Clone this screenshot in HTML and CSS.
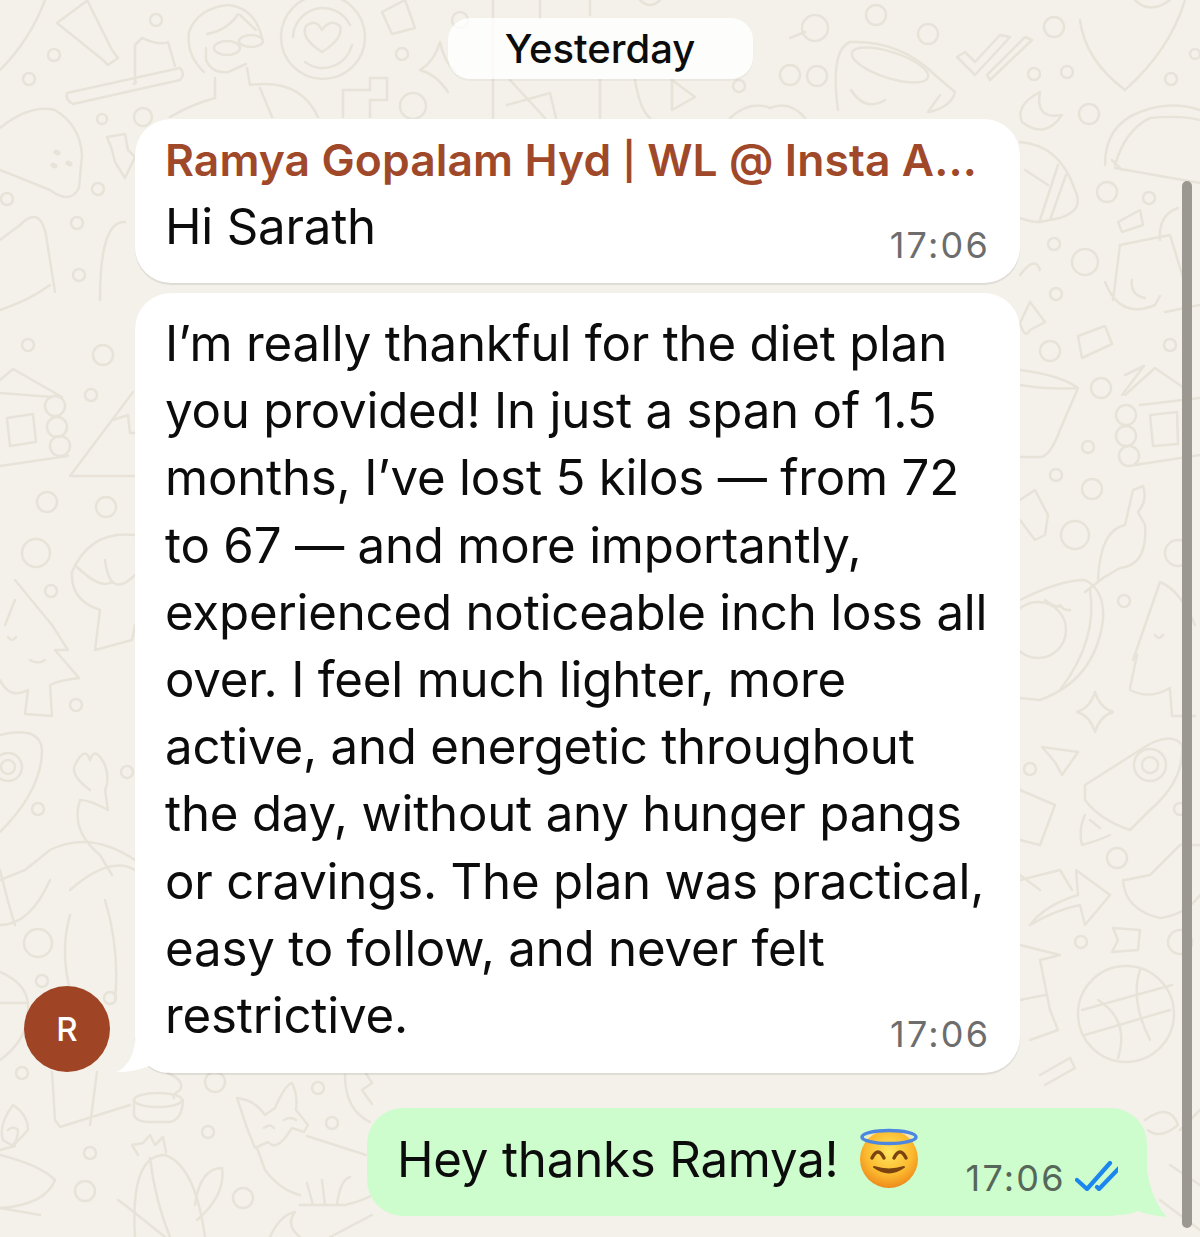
FILE: index.html
```html
<!DOCTYPE html>
<html lang="en">
<head>
  <meta charset="UTF-8" />
  <title>Chat</title>
  <link rel="stylesheet" href="styles.css">
</head>
<body>

<div class="chat">
  <svg class="doodles" viewBox="0 0 1200 1237" xmlns="http://www.w3.org/2000/svg">
    <!-- small rings -->
    <g>
      <circle cx="54" cy="55" r="6"/><circle cx="29" cy="79" r="6"/><circle cx="156" cy="20" r="6"/><circle cx="102" cy="119" r="5"/><circle cx="143" cy="117" r="9"/>
      <circle cx="402" cy="54" r="6"/><circle cx="413" cy="106" r="13"/><circle cx="7" cy="199" r="6"/><circle cx="98" cy="189" r="6"/><circle cx="77" cy="223" r="6"/><circle cx="79" cy="275" r="6"/>
      <circle cx="815" cy="28" r="13"/><circle cx="876" cy="15" r="10"/><circle cx="928" cy="34" r="10"/><circle cx="1054" cy="27" r="10"/><circle cx="1034" cy="74" r="6"/><circle cx="1067" cy="72" r="6"/>
      <circle cx="1171" cy="79" r="6"/><circle cx="1195" cy="54" r="5"/><circle cx="1089" cy="114" r="10"/><circle cx="1107" cy="192" r="10"/><circle cx="1149" cy="198" r="6"/><circle cx="1054" cy="244" r="6"/><circle cx="1085" cy="262" r="13"/>
      <circle cx="28" cy="345" r="6"/><circle cx="103" cy="355" r="10"/><circle cx="91" cy="395" r="6"/><circle cx="47" cy="502" r="10"/><circle cx="106" cy="507" r="10"/><circle cx="36" cy="553" r="14"/><circle cx="51" cy="591" r="6"/><circle cx="76" cy="705" r="6"/><circle cx="127" cy="772" r="6"/><circle cx="38" cy="809" r="6"/><circle cx="38" cy="943" r="14"/>
      <circle cx="1056" cy="294" r="6"/><circle cx="1050" cy="351" r="10"/><circle cx="1170" cy="345" r="6"/><circle cx="1101" cy="388" r="10"/><circle cx="1088" cy="447" r="6"/><circle cx="1056" cy="475" r="6"/><circle cx="1092" cy="489" r="10"/><circle cx="1075" cy="535" r="14"/><circle cx="1124" cy="601" r="6"/><circle cx="1178" cy="553" r="13"/><circle cx="1030" cy="769" r="6"/><circle cx="1117" cy="858" r="10"/><circle cx="1081" cy="942" r="6"/><circle cx="1180" cy="809" r="6"/><circle cx="1180" cy="942" r="12"/>
      <circle cx="42" cy="981" r="6"/><circle cx="110" cy="998" r="6"/><circle cx="22" cy="1073" r="6"/><circle cx="208" cy="1132" r="6"/><circle cx="90" cy="1153" r="6"/><circle cx="85" cy="1191" r="10"/><circle cx="243" cy="1198" r="10"/><circle cx="215" cy="1082" r="10"/><circle cx="318" cy="1088" r="6"/><circle cx="332" cy="1123" r="6"/>
      <circle cx="460" cy="20" r="8"/><circle cx="790" cy="75" r="10"/><circle cx="739" cy="86" r="6"/><circle cx="817" cy="76" r="10"/><circle cx="1126" cy="1125" r="6"/>
    </g>
    <!-- top left: curve, tube, cake, person, target, card, star, blocks -->
    <path d="M45 0Q30 40 0 70"/>
    <path d="M57 23L88 0M57 23L103 60L108 65L118 58L112 50M88 2L112 50"/>
    <path d="M67 93L180 68Q186 74 180 80L73 104Q65 100 67 93ZM134 84L136 82M135 82V45L142 38Q160 46 168 42L175 66"/>
    <path d="M204 72Q186 55 189 32Q198 8 228 5Q255 8 262 38M207 34Q228 30 238 14M240 15L256 30M206 48V60Q212 74 228 72L246 64M215 78V98M170 117Q190 105 215 98M247 68L250 85Q300 78 318 117M260 88L272 117"/>
    <ellipse cx="227" cy="48" rx="13" ry="7"/><ellipse cx="251" cy="41" rx="12" ry="6"/>
    <circle cx="323" cy="37" r="42"/>
    <path d="M293 37A30 30 0 0 1 350 25M352 45A30 30 0 0 1 305 62"/>
    <path d="M322 52Q300 38 306 26Q316 18 322 30Q330 18 340 26Q344 38 322 52Z"/>
    <path d="M382 12L405 0L415 28L392 34Z"/>
    <path d="M440 42Q444 62 456 72M440 42Q434 62 420 70Q436 74 448 92"/>
    <path d="M343 117V90H370V78H387V100H370V117"/>
    <!-- left: taco, bolt, bag, house, peak, shrimp, tree, eye, hand, legs -->
    <path d="M0 128Q30 104 55 110Q80 125 82 155L79 188Q70 205 50 190L0 170"/>
    <path d="M56 152l2 1M53 165l2 1M68 163l2 1" stroke-width="5"/>
    <path d="M107 137L125 134L128 150L135 157L125 178L115 162L112 150Z"/>
    <path d="M0 240L20 225Q40 205 46 235L55 292M100 300Q100 220 125 222"/>
    <path d="M0 310Q30 300 50 285"/>
    <path d="M0 380L13 369L62 397M0 393L52 397M0 466L68 456"/>
    <circle cx="55" cy="406" r="10"/><circle cx="57" cy="427" r="10"/><circle cx="60" cy="446" r="10"/>
    <path d="M7 418L33 414L36 442L10 446Z"/>
    <path d="M70 476L133 392M70 476H135M113 420L128 415L130 433H135"/>
    <path d="M135 535Q90 530 72 572Q70 600 100 610L95 650L132 640L135 625M75 565Q100 590 112 582M105 560Q110 600 135 575"/>
    <path d="M15 600L5 625M15 580L52 625L68 650L55 650L79 678Q60 680 50 685L52 716L25 714L28 690Q10 700 0 680"/>
    <path d="M8 637q4 6 8 0M30 660q8 5 15 0"/>
    <path d="M0 735Q40 725 42 750Q42 790 0 832"/><circle cx="8" cy="767" r="14"/><circle cx="8" cy="767" r="7"/>
    <path d="M90 790Q70 775 75 765Q85 745 90 760Q95 745 105 765Q110 780 105 790L108 810Q90 800 80 800Q70 830 100 855L112 875"/>
    <path d="M0 880L25 870L50 850Q90 830 135 860M0 925Q30 925 50 880M70 915Q60 950 70 990L60 1000M70 890Q110 855 135 870M105 900Q120 950 115 1000M0 870Q10 910 15 925"/>
    <!-- bottom left: globe, legs, bowl, diya, cactus, fox, star -->
    <path d="M0 972Q30 985 28 1010Q28 1040 0 1060M0 1003H28"/>
    <path d="M52 1072L55 1120L60 1127L130 1105M97 1072L90 1125"/>
    <ellipse cx="158" cy="1100" rx="24" ry="7"/>
    <path d="M134 1100V1115Q136 1122 150 1122H170Q182 1120 183 1100M165 1072Q186 1080 180 1090Q172 1095 174 1098"/>
    <path d="M13 1105Q-2 1125 3 1140L13 1146L28 1130Q28 1115 13 1105ZM8 1130Q13 1125 18 1130Q18 1140 12 1146"/>
    <path d="M0 1155Q40 1165 55 1180Q45 1205 0 1208L40 1215M0 1150L15 1146"/>
    <path d="M135 1237Q130 1155 165 1155Q195 1165 205 1237M150 1158Q155 1200 170 1237"/>
    <path d="M138 1155L132 1145L143 1143L150 1135L155 1145L163 1137L166 1152"/>
    <path d="M195 1205Q200 1168 222 1168Q226 1195 197 1220M165 1237L125 1205L118 1200"/>
    <path d="M237 1098Q255 1100 265 1115L275 1108Q285 1085 292 1083Q298 1095 296 1110L308 1125L304 1132L292 1128L285 1138Q275 1150 268 1142L255 1148L247 1128ZM307 1136L366 1155M257 1148L265 1170Q280 1190 300 1195M307 1183L313 1205M322 1180L325 1205M350 1177Q340 1180 337 1205M300 1205H345Q365 1200 372 1195"/>
    <path d="M264 1128q6 -5 10 0M284 1120q6 -4 12 0"/>
    <path d="M345 1075Q345 1110 370 1122M365 1072L372 1083L362 1090L372 1104"/>
    <path d="M270 1237Q280 1215 295 1212Q285 1225 300 1237M330 1237L372 1215"/>
    <!-- behind the day pill -->
    <path d="M493 0V118M540 0V18M507 105L550 93L556 118M510 80L545 118M600 80V118M635 80Q640 110 650 118M590 0V15M672 80V110L695 97ZM730 118Q750 100 770 108Q790 100 805 118M790 38L805 32M640 0Q650 10 660 0"/>
    <!-- top right: cup, ticks, shield, moon, taco, ball, shaker -->
    <path d="M838 110Q830 50 850 42Q900 40 935 75L955 92Q952 106 930 112"/>
    <ellipse cx="890" cy="65" rx="40" ry="13" transform="rotate(18 890 65)"/>
    <path d="M851 90Q865 112 885 100M928 112L940 95"/>
    <path d="M957 57L975 75L1010 37L1000 35L975 62L965 52ZM990 80L1032 40L1025 37L987 75Z"/>
    <path d="M1080 20Q1085 60 1125 90Q1170 50 1185 0M1135 0Q1150 15 1170 0"/>
    <path d="M1040 92Q1015 105 1022 122Q1045 140 1062 115Q1035 120 1040 92Z"/>
    <path d="M1105 165Q1105 125 1140 112Q1170 100 1200 110M1115 165Q1125 130 1150 118Q1180 115 1200 120M1115 168L1200 183M1112 160L1122 170"/>
    <path d="M1020 142Q1060 145 1075 190Q1085 210 1060 218L1040 222Q1030 222 1020 218M1058 165L1040 220M1066 175L1050 220M1025 170L1048 185"/>
    <path d="M1113 300L1120 245L1170 235L1190 300M1118 222L1140 210L1143 225L1122 232ZM1160 240Q1158 215 1178 208"/>
    <path d="M1020 275Q1035 255 1040 270"/>
    <!-- right: banana, pot, house, key, avocado, tree, rocket, arrow, sock, globe -->
    <path d="M1105 282Q1120 320 1155 305L1160 296M1165 312L1200 305M1132 280Q1130 295 1145 298"/>
    <path d="M1020 323L1030 302L1045 322L1030 330Q1025 340 1020 323"/>
    <path d="M1078 336L1105 326L1112 344L1082 358Z"/>
    <path d="M1020 370Q1060 375 1078 388L1060 430Q1050 457 1040 457H1020M1020 385Q1050 390 1078 388"/>
    <circle cx="1126" cy="415" r="10"/><circle cx="1126" cy="436" r="10"/><circle cx="1129" cy="456" r="10"/>
    <path d="M1125 375L1144 366L1122 395M1125 395L1155 368L1190 392M1140 405L1200 398M1135 465L1200 455M1150 415L1177 412L1178 444L1153 446Z"/>
    <path d="M1020 500L1035 490L1048 515L1045 535L1035 540L1020 520"/>
    <path d="M1098 580Q1100 530 1125 525L1133 490L1143 486Q1148 500 1138 512L1145 525Q1148 565 1120 568L1103 578L1085 592"/>
    <path d="M1020 600Q1060 580 1085 580Q1105 590 1103 620Q1095 680 1040 700L1020 698M1090 590Q1098 640 1060 690"/>
    <circle cx="1038" cy="630" r="28"/><path d="M1045 600q10 8 15 6M1060 605q4 6 10 5"/>
    <path d="M1133 660L1160 582Q1180 590 1195 625M1130 688L1137 655M1130 690Q1150 700 1170 688M1170 690L1172 716H1195M1155 635q4 6 8 0"/>
    <path d="M1095 692Q1100 708 1113 712Q1100 716 1095 732Q1090 716 1077 712Q1090 708 1095 692Z"/>
    <path d="M1042 747L1078 752L1062 775L1055 762Z"/>
    <path d="M1085 785L1140 750Q1170 730 1182 745Q1185 780 1150 810L1130 830Q1100 820 1085 800ZM1085 815Q1078 830 1082 845Q1100 840 1110 835M1090 820L1100 828"/>
    <circle cx="1150" cy="765" r="16"/><circle cx="1150" cy="765" r="8"/>
    <path d="M1020 790L1055 805L1040 845L1020 840"/>
    <path d="M1020 880L1060 870L1072 890M1030 925Q1045 905 1078 895L1076 870L1110 895L1085 925L1080 905Q1055 910 1030 925M1020 875L1040 890"/>
    <path d="M1125 880L1150 875L1180 845L1200 845M1123 880Q1125 910 1160 918Q1185 915 1200 895"/>
    <path d="M1113 928L1140 930L1138 950L1112 952L1118 940Z"/>
    <path d="M1020 945L1060 955L1040 960L1050 1010L1058 1030L1030 1040M1020 1000L1045 995"/>
    <circle cx="1126" cy="1014" r="48"/>
    <path d="M1082 1010L1172 985M1085 1035L1170 1010M1098 1000Q1130 1020 1118 1058M1140 970Q1130 1000 1150 1040"/>
    <path d="M1040 1075L1070 1058L1075 1068L1045 1085"/>
    <!-- under the green bubble -->
    <path d="M1145 1120Q1170 1102 1178 1125Q1160 1140 1148 1130M1170 1165L1200 1185M1160 1200L1200 1230M1200 1110L1180 1130"/>
  </svg>

  <div class="thread">
    <div class="day-row">
      <div class="day-pill">Yesterday</div>
    </div>

    <div class="msg-row in">
      <div class="bubble">
        <div class="sender">Ramya Gopalam Hyd <span class="bar">|</span> WL @ Insta A...</div>
        <div class="body-grid">
          <div class="text">Hi Sarath</div>
          <div class="time">17:06</div>
        </div>
      </div>
    </div>

    <div class="msg-row in last">
      <div class="avatar">R</div>
      <div class="bubble long">
        <svg class="tail tail-in" viewBox="0 0 50 32" xmlns="http://www.w3.org/2000/svg">
          <path d="M18 0Q16 22 0 31Q18 31 32 25Q40 31 50 32V0Z"/>
        </svg>
        <div class="body-grid">
          <div class="text">I’m really thankful for the diet plan<br>you provided! In just a span of 1.5<br>months, I’ve lost 5 kilos — from 72<br>to 67 — and more importantly,<br>experienced noticeable inch loss all<br>over. I feel much lighter, more<br>active, and energetic throughout<br>the day, without any hunger pangs<br>or cravings. The plan was practical,<br>easy to follow, and never felt<br>restrictive.</div>
          <div class="time">17:06</div>
        </div>
      </div>
    </div>

    <div class="msg-row out">
      <div class="bubble green">
        <svg class="tail tail-out" viewBox="0 0 50 60" xmlns="http://www.w3.org/2000/svg">
          <path d="M0 0H28Q30 40 49 60Q30 58 20 54Q12 58 0 58Z"/>
        </svg>
        <span class="text">Hey thanks Ramya!</span>
        <svg class="emoji" viewBox="0 0 60 60" xmlns="http://www.w3.org/2000/svg">
          <defs>
            <radialGradient id="face" cx="50%" cy="38%" r="62%">
              <stop offset="0" stop-color="#ffe45c"/>
              <stop offset="0.65" stop-color="#fbb92e"/>
              <stop offset="1" stop-color="#ee8a1c"/>
            </radialGradient>
          </defs>
          <ellipse class="halo-glow" cx="30" cy="10" rx="23" ry="8"/>
          <circle cx="30" cy="31" r="29" fill="url(#face)"/>
          <path class="face-line" d="M13 30Q19 18 25 30M35 30Q41 18 47 30"/>
          <path class="smile" d="M15 39Q30 50 45 39Q30 44 15 39Z"/>
          <ellipse class="halo" cx="30" cy="9" rx="27" ry="6.5"/>
        </svg>
        <span class="time">17:06</span>
        <svg class="ticks" viewBox="0 0 52 30" xmlns="http://www.w3.org/2000/svg">
          <path d="M2 19L12 28L35 2M22 26L24 28L49 2"/>
        </svg>
      </div>
    </div>
  </div>

  <div class="scrollbar"></div>
</div>

</body>
</html>
```

FILE: styles.css
```css
body {
  margin: 0;
  font-family: "Inter", "Liberation Sans", sans-serif;
  color: #0c0c0c;
}
.chat {
  position: relative;
  width: 1200px;
  height: 1237px;
  overflow: hidden;
  background-color: #f4f1ea;
}
.doodles {
  position: absolute;
  top: 0;
  left: 0;
  width: 1200px;
  height: 1237px;
  fill: none;
  stroke: #e8e3d9;
  stroke-width: 2.5;
  stroke-linecap: round;
  stroke-linejoin: round;
}
.thread {
  position: relative;
  display: flex;
  flex-direction: column;
  padding-top: 18px;
}
.day-row {
  display: flex;
  justify-content: center;
  margin-bottom: 40px;
}
.day-pill {
  width: 305px;
  height: 61px;
  display: flex;
  align-items: center;
  justify-content: center;
  border-radius: 22px;
  background-color: rgba(255, 255, 255, 0.82);
  box-shadow: 0 2px 1px rgba(0, 0, 0, 0.04);
  font-size: 40px;
  font-weight: 500;
}
.msg-row {
  display: flex;
  align-items: flex-end;
}
.msg-row.in {
  padding-left: 135px;
  margin-bottom: 10px;
}
.msg-row.in.last {
  padding-left: 24px;
  gap: 25px;
  margin-bottom: 35px;
}
.msg-row.out {
  justify-content: flex-end;
  padding-right: 53px;
}
.bubble {
  position: relative;
  box-sizing: border-box;
  width: 885px;
  padding: 10px 33px 23.3px 30px;
  border-radius: 36px;
  background-color: #fff;
  box-shadow: 0 2px 1px rgba(0, 0, 0, 0.09);
}
.bubble.long {
  padding-top: 17px;
  padding-bottom: 24px;
}
.bubble.green {
  width: 780px;
  height: 108px;
  padding: 0 25px 0 30px;
  display: flex;
  align-items: center;
  background-color: #cdfccd;
  box-shadow: none;
}
.sender {
  margin-bottom: 1.5px;
  font-size: 44.4px;
  font-weight: 600;
  line-height: 62px;
  letter-spacing: 0.1px;
  color: #a0492a;
  white-space: nowrap;
}
.bar {
  font-size: 37px;
  line-height: 0;
  vertical-align: 2px;
}
.body-grid {
  display: grid;
}
.body-grid > * {
  grid-area: 1 / 1;
}
.text {
  font-size: 49.2px;
  line-height: 67.2px;
  letter-spacing: -0.2px;
  white-space: nowrap;
}
.green .text {
  margin-bottom: 6px;
}
.time {
  justify-self: end;
  align-self: end;
  margin-right: -3px;
  font-size: 36px;
  line-height: 30px;
  letter-spacing: 2.2px;
  color: #6d6d6d;
}
.green .time {
  align-self: center;
  margin: 32px 0 0 47px;
  color: #56675a;
}
.avatar {
  width: 86px;
  height: 86px;
  flex: none;
  margin-bottom: 1px;
  display: flex;
  align-items: center;
  justify-content: center;
  border-radius: 50%;
  background-color: #9f4526;
  color: #fff;
  font-size: 33px;
  font-weight: 500;
}
.tail {
  position: absolute;
  bottom: 0;
}
.tail-in {
  left: -18px;
  width: 50px;
  height: 32px;
  fill: #fff;
}
.tail-out {
  right: -21px;
  bottom: -1px;
  width: 50px;
  height: 60px;
  fill: #cdfccd;
}
.emoji {
  width: 60px;
  height: 60px;
  flex: none;
  margin: -9px 0 0 20px;
}
.halo-glow {
  fill: #f7e9b5;
}
.halo {
  fill: none;
  stroke: #4d86e0;
  stroke-width: 3.5;
}
.face-line {
  fill: none;
  stroke: #7a4310;
  stroke-width: 3.5;
  stroke-linecap: round;
}
.smile {
  fill: #7a4310;
  stroke: #7a4310;
  stroke-width: 2;
  stroke-linejoin: round;
}
.ticks {
  width: 52px;
  height: 30px;
  flex: none;
  margin: 28px 0 0 9px;
  fill: none;
  stroke: #1a86ee;
  stroke-width: 4.2;
  stroke-linecap: round;
  stroke-linejoin: round;
}
.scrollbar {
  position: absolute;
  top: 181px;
  left: 1182px;
  width: 10px;
  height: 1047px;
  border-radius: 5px;
  background-color: #9b9892;
}
```
